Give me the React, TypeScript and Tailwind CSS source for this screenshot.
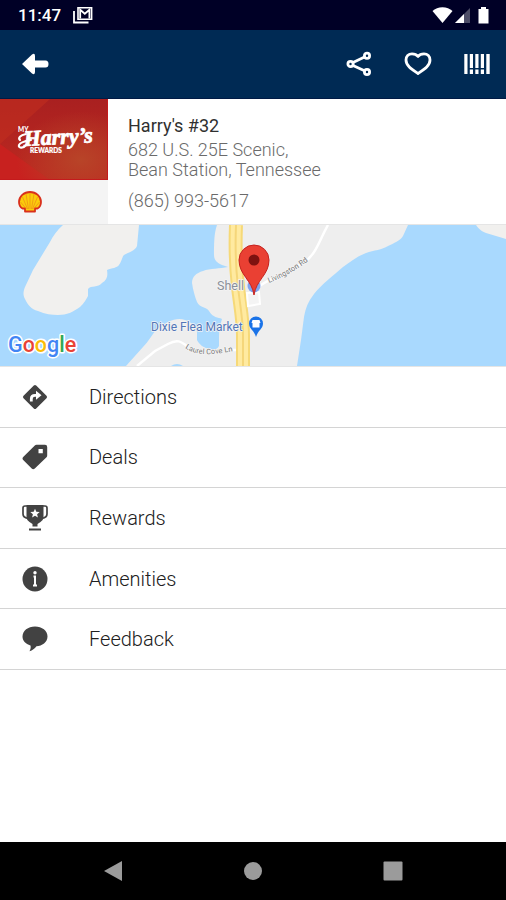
import type { ReactNode } from "react";

const StatusBar = () => (
  <div className="flex h-[30px] items-center justify-between bg-[#000026] pl-[18px] pr-4 text-white">
    <div className="flex items-center gap-3">
      <span className="text-[17px] font-medium leading-5">11:47</span>
      <svg width="20" height="17" viewBox="0 0 20 17" aria-hidden="true">
        <path d="M1 4v11.500h14.500" fill="none" stroke="#fff" strokeWidth="1.800" />
        <path d="M5 .8h13.600v11.400H5z" fill="none" stroke="#fff" strokeWidth="1.600" />
        <path d="M7.200 11.500V2.800l4.600 4 4.600-4v8.700" fill="none" stroke="#fff" strokeWidth="1.800" />
      </svg>
    </div>
    <svg width="58" height="18" viewBox="0 0 58 18" fill="#fff" aria-hidden="true">
      <path d="M.5 5C3 2.600 6.600 1.200 10.500 1.200S18 2.600 20.500 5l-10 12z" />
      <path d="M23 17L38 2v15z" fillOpacity=".3" />
      <path d="M23 17l9-9v9z" />
      <path d="M49 1h5v2h2.500v14.500h-10V3H49z" />
    </svg>
  </div>
);

const TopBar = () => (
  <header className="flex h-[69px] items-center justify-between border-b border-[#001a45] bg-[#002a54] pl-[21px] pr-4 text-white">
    <button aria-label="Back">
      <svg width="28" height="22" viewBox="0 0 28 22" fill="#fff">
        <path d="M1 11L11 1.500q3-1.800 3 1.500v4.500h10.500q3 0 3 3.500t-3 3.500H14V19q0 3.300-3 1.500z" />
      </svg>
    </button>
    <div className="flex items-center gap-8">
      <button aria-label="Share">
        <svg width="26" height="26" viewBox="0 0 26 26" fill="none" stroke="#fff" strokeWidth="2.800">
          <circle cx="4.500" cy="13" r="2.600" />
          <circle cx="21" cy="4.700" r="2.600" />
          <circle cx="21" cy="21" r="2.600" />
          <path d="M7 11.500l11.500-5.500M7 14.500l11.500 5.300" />
        </svg>
      </button>
      <button aria-label="Favorite">
        <svg width="28" height="24" viewBox="0 0 28 24" fill="none" stroke="#fff" strokeWidth="2.800" strokeLinejoin="round">
          <path d="M14 4.500C12 1.800 9.500 1.800 8 1.800 4.500 1.800 2 4.500 2 8c0 6 6 9.500 12 13.500C20 17.500 26 14 26 8c0-3.500-2.500-6.200-6-6.200-1.500 0-4 0-6 2.700z" />
        </svg>
      </button>
      <button aria-label="Barcode">
        <svg width="26" height="20" viewBox="0 0 26 20" fill="#fff">
          <path d="M.3 0h3.200v20H.3zM5.800 0H9v14H5.800zM11.300 0h3.200v14h-3.200zM16.800 0H20v14h-3.200zM22.300 0h3.400v20h-3.400zM5.800 15.500H9V20H5.800zM11.300 15.500h3.200V20h-3.200zM16.800 15.500H20V20h-3.200z" />
        </svg>
      </button>
    </div>
  </header>
);

const HarrysLogo = () => (
  <svg width="108" height="81" viewBox="0 0 108 81" role="img" aria-label="My Harry's Rewards" className="block">
    <defs>
      <linearGradient id="red" x1="0" y1="0" x2="0" y2="1">
        <stop offset="0" stopColor="#a92020" />
        <stop offset="1" stopColor="#bd2920" />
      </linearGradient>
      <radialGradient id="glow" cx=".75" cy=".75" r=".6">
        <stop offset="0" stopColor="#b84428" />
        <stop offset="1" stopColor="#b84428" stopOpacity="0" />
      </radialGradient>
    </defs>
    <path d="M0 0h108v81H0z" fill="url(#red)" />
    <path d="M0 45L50 0H0z" fill="#c3301f" fillOpacity=".55" />
    <path d="M0 45l50 36H0z" fill="#c8211f" />
    <path d="M0 0h108v81H0z" fill="url(#glow)" />
    <path d="M107.500 0v80.500H0" fill="none" stroke="#c41a1c" />
    <g fill="#fff" stroke="#fff">
      <text x="18" y="33" fontSize="6.500" fontFamily="Lato, sans-serif" fontWeight="900" strokeWidth="0">MY</text>
      <text x="24" y="47" fontSize="22" fontFamily="Liberation Serif, serif" fontStyle="italic" fontWeight="700" strokeWidth=".8" transform="rotate(-3 24 47)">Harry’s</text>
      <text x="30" y="54" fontSize="6.500" fontFamily="Lato, sans-serif" fontWeight="900" strokeWidth=".2">REWARDS</text>
      <path d="M26 35C20 36 18 39 20 41M26 46c-3 4-8 3-7 0 1-3 6-4 12-5" fill="none" strokeWidth="2.200" strokeLinecap="round" />
    </g>
  </svg>
);

const ShellLogo = () => (
  <svg width="24" height="22" viewBox="0 0 24 22" role="img" aria-label="Shell">
    <path
      d="M7 20.500v-3H4.500C2 16 1 13.500 1 11 1 5.500 6 1 12 1s11 4.500 11 10c0 2.500-1 5-3.500 6.500H17v3z"
      fill="#fbcc0b"
      stroke="#d9301c"
      strokeWidth="1.800"
      strokeLinejoin="round"
    />
    <path d="M12 2v16M8 3l2.500 15M16 3l-2.500 15M4.500 6L9.500 18M19.500 6l-5 12M2.500 11l6 7M21.500 11l-6 7" stroke="#ec7d1a" strokeWidth=".6" />
  </svg>
);

const StoreCard = () => (
  <section className="flex border-b border-neutral-200">
    <div className="flex w-[108px] shrink-0 flex-col bg-[#f4f4f4]">
      <HarrysLogo />
      <div className="flex flex-1 items-center pl-[18px]">
        <ShellLogo />
      </div>
    </div>
    <div className="flex-1 px-5 pb-[13px] pt-4 text-[18px] font-light leading-5 text-[#6a6a6a]">
      <h1 className="font-normal leading-[22px] text-[#303030]">Harry's #32</h1>
      <address className="mt-[3px] not-italic">
        682 U.S. 25E Scenic,
        <br />
        Bean Station, Tennessee
      </address>
      <a href="tel:8659935617" className="mt-[11px] block">
        (865) 993-5617
      </a>
    </div>
  </section>
);

const StoreMap = () => (
  <svg
    className="block h-[142px] w-full border-b border-neutral-200"
    viewBox="0 0 506 141"
    preserveAspectRatio="xMidYMid slice"
    fontFamily="Roboto, sans-serif"
    role="img"
    aria-label="Map"
  >
    <path d="M0 0h506v141H0z" fill="#a9d9fe" />
    <path
      d="M63 0C57 5 53 11 50 17L33 45 25 62C23 67 23 70 25 74 28 80 31 84 38 86 45 89 52 90 58 90 67 90 73 87 80 82 84 78 86 75 88 71V64C91 60 98 63 102 58 107 55 108 51 107 45 112 43 117 43 119 40 122 36 122 32 124 30 129 27 135 26 137 21L139 0z"
      fill="#f1f0ee"
    />
    <path
      d="M217 0C214 8 214 20 214 30 214 36 218 38 222 40L228 42C220 44 210 43 203 46 196 48 192 52 192 58 193 65 195 72 197 77 200 83 207 82 209 86 213 93 218 92 222 94 220 100 219 106 219 112V121C217 125 213 125 210 124 203 123 199 119 197 115V107C196 101 191 97 185 95 176 92 166 97 156 105 152 110 148 117 143 122L126 141H297L301 115 304 92C306 82 308 77 314 69 321 60 335 49 343 42 351 36 358 31 366 28 374 25 382 25 388 21 394 18 400 16 403 11L408 0z"
      fill="#eeeeee"
    />
    <path d="M476 0C479 4 481 6 486 8L506 14V0z" fill="#f1f0ee" />
    <path d="M171 141q6-4 12 0z" fill="#a9d9fe" />
    <g fill="none" stroke="#fff" strokeWidth="2.500">
      <path d="M137 141L155 126 168 119C177 114 181 116 188 122" />
      <path d="M233 125h14" />
      <path d="M248 75C254 62 264 58 276 52L305 37C317 27 318 18 328 0" />
    </g>
    <path d="M236 0C235 25 236 45 238 62 240 80 243 95 243 110V141" fill="none" stroke="#f6d978" strokeWidth="14" />
    <path d="M236 0C235 25 236 45 238 62 240 80 243 95 243 110V141" fill="none" stroke="#ffeaa0" strokeWidth="10" />
    <path d="M236 0C235 25 236 45 238 62 240 80 243 95 243 110V141" fill="none" stroke="#f5d67a" strokeWidth="2" />
    <path d="M247 68l12-1 1 12-12 2z" fill="#f4f4f4" stroke="#fff" strokeWidth="2" />
    <circle cx="254" cy="61" r="6.500" fill="#7fa5f0" />
    <g stroke="#f4f4f4" strokeWidth="1.500" strokeLinejoin="round" paintOrder="stroke">
      <text x="217" y="65" fontSize="12.500" fill="#8a8f99">Shell</text>
      <text x="151" y="106" fontSize="12" fill="#5276b8">Dixie Flea Market</text>
      <path id="laurel" d="M185 123C195 130 208 131 234 126" fill="none" stroke="none" />
      <path id="livingston" d="M269 58Q292 49 312 33" fill="none" stroke="none" />
      <text fontSize="7.500" fill="#777">
        <textPath href="#laurel">Laurel Cove Ln</textPath>
      </text>
      <text fontSize="7.500" fill="#777">
        <textPath href="#livingston">Livingston Rd</textPath>
      </text>
    </g>
    <path d="M256 112C254 105 249 104 249 98.500a7 7 0 0 1 14 0C263 104 258 105 256 112z" fill="#1a73e8" />
    <path d="M252.500 95h7l1 3h-1v4.500h-7V98h-1z" fill="#fff" />
    <path d="M254 70C252 55 239 50 239 35a15 15 0 0 1 30 0C269 50 256 55 254 70z" fill="#ea4033" stroke="#c5221f" />
    <circle cx="254" cy="35" r="5.500" fill="#7e1210" />
    <text x="8" y="127" fontSize="21.500" fontWeight="500" stroke="#fff" strokeWidth="3" strokeLinejoin="round" paintOrder="stroke">
      <tspan fill="#4285f4">G</tspan>
      <tspan fill="#ea4335">o</tspan>
      <tspan fill="#fbbc05">o</tspan>
      <tspan fill="#4285f4">g</tspan>
      <tspan fill="#34a853">l</tspan>
      <tspan fill="#ea4335">e</tspan>
    </text>
  </svg>
);

const DirectionsIcon = () => (
  <svg width="26" height="26" viewBox="0 0 26 26">
    <path d="M11.800 1.500q1.200-1.200 2.400 0l10.300 10.300q1.200 1.200 0 2.400L14.200 24.500q-1.200 1.200-2.400 0L1.500 14.200q-1.200-1.200 0-2.400z" fill="#424242" />
    <path d="M9.300 17.500V15q0-3.700 3.700-3.700h2" fill="none" stroke="#fff" strokeWidth="2.800" />
    <path d="M14 6.800l5.500 4.500-5.500 4.500z" fill="#fff" />
  </svg>
);

const TagIcon = () => (
  <svg width="26" height="26" viewBox="0 0 26 26" fill="#424242">
    <path
      fillRule="evenodd"
      d="M14.500.8H23q2.200 0 2.200 2.200v8.500q0 1-.7 1.800L12.800 24.600q-1.600 1.400-3.100 0L1.200 16q-1.400-1.500 0-3L12.800 1.500q.7-.7 1.700-.7zM16.500 5v4.300h4.300V5z"
    />
  </svg>
);

const TrophyIcon = () => (
  <svg width="26" height="26" viewBox="0 0 26 26" fill="#424242">
    <path
      fillRule="evenodd"
      d="M4.500 0h17v12q0 3-3 5L15.500 19v2.500h-5V19L7.500 17Q4.500 15 4.500 12zM13 3.700l-1.300 3.100-3.400.3 2.600 2.200-.8 3.300 2.900-1.800 2.900 1.800-.8-3.300 2.600-2.200-3.400-.3z"
    />
    <path d="M5 1H3Q1 1 1 3v6q0 3.500 5 4.500M21 1h2q2 0 2 2v6q0 3.500-5 4.500" fill="none" stroke="#424242" strokeWidth="1.700" />
    <path d="M7 23.500h12v2H7z" />
  </svg>
);

const InfoIcon = () => (
  <svg width="26" height="26" viewBox="0 0 26 26">
    <circle cx="13" cy="13" r="12.500" fill="#424242" />
    <circle cx="13" cy="6.800" r="1.700" fill="#fff" />
    <path d="M11.500 10.500H13V19M11 19.500h4" fill="none" stroke="#fff" strokeWidth="2" />
  </svg>
);

const CommentIcon = () => (
  <svg width="26" height="26" viewBox="0 0 26 26" fill="#424242">
    <path d="M13 .5C20 .5 25.500 4.800 25.500 10.500S20 20 14.500 20.200C12.500 22.500 10.500 24.500 7.500 25.200 8.500 23.500 9 21.500 8.500 19.500 3.500 18 .5 14.500.5 10.500.5 4.800 6 .5 13 .5z" />
  </svg>
);

const menuItems: { label: string; icon: ReactNode }[] = [
  { label: "Directions", icon: <DirectionsIcon /> },
  { label: "Deals", icon: <TagIcon /> },
  { label: "Rewards", icon: <TrophyIcon /> },
  { label: "Amenities", icon: <InfoIcon /> },
  { label: "Feedback", icon: <CommentIcon /> },
];

const StoreMenu = () => (
  <ul className="grid min-h-[303px] auto-rows-fr">
    {menuItems.map((item) => (
      <li key={item.label} className="border-b border-neutral-300">
        <a href="#" className="flex h-full items-center text-[20px] font-light text-[#202020]">
          <span className="flex w-[70px] shrink-0 justify-center">{item.icon}</span>
          <span className="pl-[19px]">{item.label}</span>
        </a>
      </li>
    ))}
  </ul>
);

const NavBar = () => (
  <nav className="mt-auto flex h-[58px] items-center justify-between bg-black px-[103px]">
    <button aria-label="Back">
      <svg width="20" height="22" viewBox="0 0 20 22" fill="#9b9b9b">
        <path d="M19 1v20L1 11z" />
      </svg>
    </button>
    <button aria-label="Home">
      <svg width="20" height="20" viewBox="0 0 20 20" fill="#9b9b9b">
        <circle cx="10" cy="10" r="9" />
      </svg>
    </button>
    <button aria-label="Recent apps">
      <svg width="20" height="20" viewBox="0 0 20 20" fill="#9b9b9b">
        <rect x=".5" y=".5" width="19" height="19" rx="1" />
      </svg>
    </button>
  </nav>
);

const App = () => {
  return (
    <div className="flex min-h-screen flex-col bg-white font-['Roboto',sans-serif]">
      <StatusBar />
      <TopBar />
      <main>
        <StoreCard />
        <StoreMap />
        <StoreMenu />
      </main>
      <NavBar />
    </div>
  );
};

export default App;
